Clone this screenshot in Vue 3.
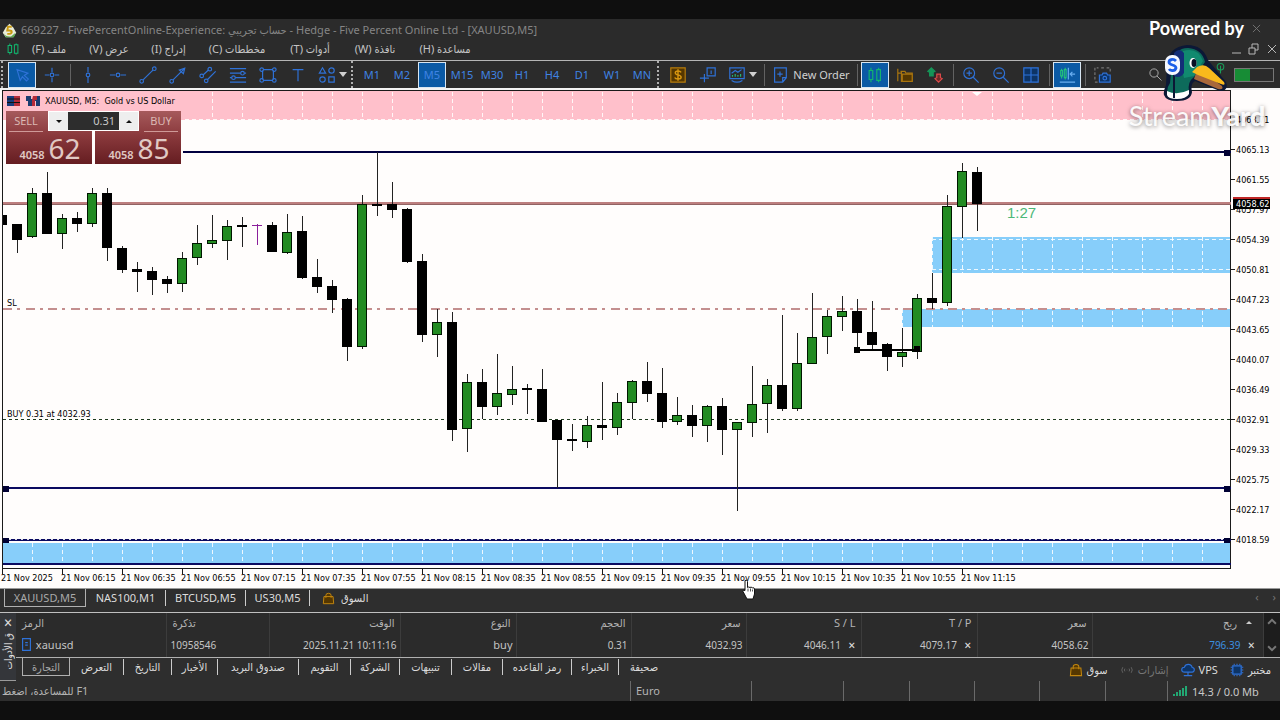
<script setup>
import { ref } from 'vue'

const volume = ref('0.31')

const menus = ['ملف (F)', 'عرض (V)', 'إدراج (I)', 'مخططات (C)', 'أدوات (T)', 'نافذة (W)', 'مساعدة (H)']

const icons = {
  cursor: '<path d="M4.500 4l3.500 12 2.500-4 4.500 4.500 2-2-4.500-4 4-2.500z"/>',
  cross: '<path d="M10 2v5M10 13v5M2 10h5M13 10h5"/><circle cx="10" cy="10" r="2"/>',
  vline: '<path d="M10 1v6M10 12v7"/><circle cx="10" cy="10" r="2"/>',
  hline: '<path d="M1 10h6M13 10h6"/><circle cx="10" cy="10" r="2"/>',
  trend: '<path d="M4.500 15.500l11-11"/><circle cx="3" cy="17" r="2"/><circle cx="17" cy="3" r="2"/>',
  arrow: '<path d="M4.500 15.500l12-12M11.500 4.500l6-2-1.500 6z"/><circle cx="3" cy="17" r="2"/>',
  channel: '<path d="M4.500 10l6-5.500M9.500 15l9-9"/><circle cx="3" cy="11" r="2"/><circle cx="12" cy="3.500" r="2"/><circle cx="8" cy="16.500" r="2"/>',
  fib: '<path d="M1 3h18M1 8h12M17 8h2M1 13h2M7 13h12M1 18h18"/><circle cx="15" cy="8" r="2"/><circle cx="5" cy="13" r="2"/>',
  rect: '<path d="M5 4h10M5 16h10M4 5v10M16 5v10"/><circle cx="3" cy="4" r="2"/><circle cx="17" cy="4" r="2"/><circle cx="3" cy="16" r="2"/><circle cx="17" cy="16" r="2"/>',
  text: '<path d="M4 4h12M10 4v13"/>',
  shapes: '<path d="M5 2l3.500 6h-7zM12 12h6v6h-6z"/><circle cx="15" cy="5" r="3"/><circle cx="5" cy="15" r="3"/>',
  dollar: '<path d="M2 2h16v16H2z" fill="#553700" stroke="#b87d0c"/><path d="M13.500 7q-1-1.500-3.500-1.500-3 0-3 2 0 1.800 3 2.400 3.500.7 3.500 2.600 0 2-3.500 2-3 0-3.700-1.700M10 3.500v13" stroke="#d8960f" stroke-width="1.600"/>',
  info: '<path d="M9 2h9v9H9zM13.500 5v4M6 9v9M1 13.500h10"/>',
  indicators: '<path d="M2 2h16v12H2zM4 16q6 4 12 0"/><path d="M4 8l4-3 3 2 4-3" /><path d="M5 12v-2M8 12v-3M11 12v-2M14 12v-3" stroke="#25b577"/>',
  order: '<path d="M4 2h13v11l-4 5H4zM13 18v-5h4M10 6v6M7 9h6"/>',
  candles: '<path d="M5.500 2v3M5.500 15v3M3.500 5h4v10h-4zM14 2v2M14 16v2M12 4h4v12h-4z" stroke="#12b56e"/>',
  folders: '<path d="M5 6h5l1 2h7v9H6V6M2 3v14M2 8h4" stroke="#a9750f"/><path d="M7 9h11v8H7z" fill="#553700" stroke="#a9750f"/>',
  swap: '<path d="M6 2l4 4-2 1v4H4V7L2 6z" fill="#159458" stroke="#159458"/><path d="M14 18l4-4-2-1V9h-4v4l-2 1z" fill="#702828" stroke="#dc4a4a"/>',
  zoomIn: '<circle cx="8" cy="8" r="6"/><path d="M12.500 12.500l6 6M8 5v6M5 8h6"/>',
  zoomOut: '<circle cx="8" cy="8" r="6"/><path d="M12.500 12.500l6 6M5 8h6"/>',
  grid: '<path d="M2 2h16v16H2zM10 2v16M2 10h16" fill="#0d3466"/>',
  shift: '<path d="M11.500 2v13M19 9h-5M16 6.500L13.500 9l2.500 2.500M2 18h17" stroke="#69aef0"/><path d="M3 5h2v6H3zM7 4h2v9H7zM4 3v2M4 11v3M8 2v2M8 13v2" stroke="#22c07c"/>',
  camera: '<path d="M1 15V2h4M8 2h3M14 2h4v4M1 18h3" stroke="#777" stroke-dasharray="3 2"/><path d="M6 10h3l1-2h4l1 2h3v8H6z" fill="#0d3466"/><circle cx="12" cy="13.500" r="2"/>',
  search: '<circle cx="8" cy="8" r="5.500" stroke="#aaa"/><path d="M12 12l6 6" stroke="#aaa"/>',
  pin: '<circle cx="10" cy="7" r="6" stroke="#1a9a5a" stroke-width="2"/><path d="M10 5v14" stroke="#1a9a5a" stroke-width="2"/>',
  bag: '<path d="M3 7h14l1 11H2zM6 9V5q0-3 4-3t4 3v4" fill="#553700" stroke="#c1860f" stroke-width="1.500"/>',
  chart: '<path d="M5.500 2v3M5.500 15v3M3 5h5v10H3zM14.500 2v2M14.500 16v2M12 4h5v12h-5z" stroke="#12b56e" stroke-width="1.500"/>',
  doc: '<path d="M4 1h12v18H4zM8 7h4M8 11h4" stroke-width="1.800"/>',
  cloud: '<path d="M5 13q-4 0-4-3.500T5 6q1-4 5.500-4T16 6.500q3 0 3 3.200T16 13zM10 13v4M4 18h12" fill="#0d3466" stroke-width="1.600"/>',
  chip: '<path d="M4 4h12v12H4z" fill="#0d3466" stroke-width="1.800"/><path d="M6 1v2M10 1v2M14 1v2M6 17v2M10 17v2M14 17v2M1 6h2M1 10h2M1 14h2M17 6h2M17 10h2M17 14h2" stroke-width="1.500"/>',
  signals: '<path d="M4 6q-3 4 0 8M7 8q-1.500 2 0 4M13 8q1.500 2 0 4M16 6q3 4 0 8M10 9.500v1" stroke="#666"/>'
}

const drawTools = [
  { icon: 'cursor', label: 'Cursor', active: true },
  { icon: 'cross', label: 'Crosshair' },
  { sep: true },
  { icon: 'vline', label: 'Vertical line' },
  { icon: 'hline', label: 'Horizontal line' },
  { icon: 'trend', label: 'Trendline' },
  { icon: 'arrow', label: 'Arrow' },
  { icon: 'channel', label: 'Channel' },
  { icon: 'fib', label: 'Fibonacci' },
  { icon: 'rect', label: 'Rectangle' },
  { icon: 'text', label: 'Text' },
  { icon: 'shapes', label: 'Shapes', caret: true }
]
const frames = ['M1', 'M2', 'M5', 'M15', 'M30', 'H1', 'H4', 'D1', 'W1', 'MN']
const activeFrame = ref('M5')
const chartTools = [
  { icon: 'dollar', label: 'Trading' },
  { icon: 'info', label: 'Data window' },
  { icon: 'indicators', label: 'Indicators', caret: true },
  { sep: true },
  { icon: 'order', label: 'New Order', text: 'New Order' },
  { sep: true },
  { icon: 'candles', label: 'Candlesticks', active: true },
  { icon: 'folders', label: 'Templates' },
  { icon: 'swap', label: 'Up and down' },
  { sep: true },
  { icon: 'zoomIn', label: 'Zoom in' },
  { icon: 'zoomOut', label: 'Zoom out' },
  { icon: 'grid', label: 'Tile windows' },
  { sep: true },
  { icon: 'shift', label: 'Chart shift', active: true },
  { sep: true },
  { icon: 'camera', label: 'Screenshot' }
]

// [high, body top, body bottom, low, direction]
const candles = [
  [215, 215, 225, 225, 'd'], [224, 224, 240, 253, 'd'], [188, 193, 237, 238, 'u'], [172, 193, 234, 234, 'd'],
  [214, 218, 234, 249, 'u'], [212, 218, 224, 232, 'd'], [188, 193, 224, 227, 'u'], [188, 193, 248, 261, 'd'],
  [246, 248, 270, 273, 'd'], [262, 269, 272, 292, 'd'], [267, 271, 280, 295, 'd'], [276, 279, 284, 293, 'd'],
  [252, 258, 284, 292, 'u'], [225, 243, 258, 265, 'u'], [215, 240, 244, 248, 'u'], [220, 226, 241, 260, 'u'],
  [217, 225, 227, 247, 'd'], [224, 225, 226, 245, 'n'], [222, 225, 252, 252, 'd'], [214, 232, 253, 254, 'u'],
  [216, 231, 278, 279, 'd'], [259, 277, 287, 293, 'd'], [280, 286, 300, 313, 'd'], [298, 299, 347, 361, 'd'],
  [195, 204, 347, 349, 'u'], [152, 204, 206, 216, 'd'], [182, 204, 210, 218, 'd'], [208, 209, 262, 263, 'd'],
  [254, 261, 335, 342, 'd'], [309, 322, 335, 357, 'u'], [312, 322, 430, 441, 'd'], [374, 382, 429, 452, 'u'],
  [369, 382, 407, 419, 'd'], [354, 393, 407, 415, 'u'], [366, 389, 395, 405, 'u'], [384, 388, 390, 414, 'd'],
  [369, 389, 422, 422, 'd'], [420, 420, 440, 488, 'd'], [424, 439, 441, 451, 'd'], [416, 425, 442, 448, 'u'],
  [382, 425, 428, 440, 'd'], [393, 402, 428, 435, 'u'], [380, 381, 403, 419, 'u'], [362, 381, 394, 402, 'd'],
  [368, 393, 422, 428, 'd'], [397, 415, 422, 425, 'u'], [405, 415, 426, 437, 'd'], [405, 406, 426, 442, 'u'],
  [398, 406, 430, 455, 'd'], [422, 422, 430, 511, 'u'], [366, 404, 423, 437, 'u'], [379, 385, 404, 433, 'u'],
  [315, 385, 409, 411, 'd'], [333, 363, 409, 411, 'u'], [293, 337, 364, 364, 'u'], [310, 316, 337, 354, 'u'],
  [296, 311, 317, 331, 'u'], [299, 311, 333, 348, 'd'], [301, 332, 345, 349, 'd'], [343, 344, 357, 371, 'd'],
  [328, 352, 357, 367, 'u'], [294, 298, 352, 359, 'u'], [273, 298, 303, 309, 'd'], [195, 206, 303, 306, 'u'],
  [163, 171, 207, 238, 'u'], [167, 172, 204, 231, 'd']
].map(([high, top, bottom, low, dir], i) => {
  const x = 15 * i + 2
  const left = Math.max(x - 5, 3)
  return { x, left, width: x + 6 - left, high, top, bottom, low, dir }
})
const bodyFill = { u: '#228b22', d: '#000', n: '#8b1f9b' }
const bodyLine = { u: '#001800', d: '#000', n: '#8b1f9b' }

const prices = ['4068.71', '4065.13', '4061.55', '4057.97', '4054.39', '4050.81', '4047.23', '4043.65', '4040.07', '4036.49', '4032.91', '4029.33', '4025.75', '4022.17', '4018.59']
const times = ['2025', '06:15', '06:35', '06:55', '07:15', '07:35', '07:55', '08:15', '08:35', '08:55', '09:15', '09:35', '09:55', '10:15', '10:35', '10:55', '11:15']
const gridX = Array.from({ length: 40 }, (_, i) => 32 + 30 * i)

const symbols = ['XAUUSD,M5', 'NAS100,M1', 'BTCUSD,M5', 'US30,M5']
const columns = ['الرمز', 'تذكرة', 'الوقت', 'النوع', 'الحجم', 'سعر', 'S / L', 'T / P', 'سعر', 'ربح']
const tabs = ['التجارة', 'التعرض', 'التاريخ', 'الأخبار', 'صندوق البريد', 'التقويم', 'الشركة', 'تنبيهات', 'مقالات', 'رمز القاعده', 'الخبراء', 'صحيفة']
</script>

<template>
  <div class="terminal">
    <header class="title">
      <svg class="logo" viewBox="0 0 20 20">
        <path d="M10 1l5 5 4 7-4 6H5l-4-6 4-7z" fill="#e9ecd8" />
        <path d="M2 13q3 6 10 5l6-5-2 6H5z" fill="#5aa84d" />
        <path d="M13 5H8L7 10h3q3 0 3 2t-3 2.500H7" fill="none" stroke="#c99a10" stroke-width="2.500" />
      </svg>
      <h1>669227 - FivePercentOnline-Experience: حساب تجريبي - Hedge - Five Percent Online Ltd - [XAUUSD,M5]</h1>
    </header>

    <nav class="menu">
      <svg class="icon menu-icon" viewBox="0 0 20 20" v-html="icons.chart"></svg>
      <button v-for="m in menus" :key="m" type="button" dir="rtl">{{ m }}</button>
      <svg class="window-controls" viewBox="0 0 48 14">
        <path d="M2 11h9M19 6h6v6h-6zM22 6V2h6v6h-3M38 3l8 8M46 3l-8 8" />
      </svg>
    </nav>

    <div class="toolbar">
      <i class="grip"></i>
      <template v-for="(t, i) in drawTools" :key="'d' + i">
        <i v-if="t.sep" class="sep"></i>
        <button v-else type="button" class="tool" :class="{ active: t.active, wide: t.caret }" :aria-label="t.label">
          <svg class="icon" viewBox="0 0 20 20" v-html="icons[t.icon]"></svg>
          <i v-if="t.caret" class="caret"></i>
        </button>
      </template>
      <i class="grip"></i>
      <button
        v-for="f in frames" :key="f" type="button" class="tool frame"
        :class="{ active: f === activeFrame }" @click="activeFrame = f"
      >{{ f }}</button>
      <i class="grip"></i>
      <template v-for="(t, i) in chartTools" :key="'c' + i">
        <i v-if="t.sep" class="sep"></i>
        <button v-else type="button" class="tool" :class="{ active: t.active, wide: t.caret, order: t.text }" :aria-label="t.label">
          <svg class="icon" viewBox="0 0 20 20" v-html="icons[t.icon]"></svg>
          <span v-if="t.text">{{ t.text }}</span>
          <i v-if="t.caret" class="caret"></i>
        </button>
      </template>
      <div class="toolbar-end">
        <button type="button" class="tool" aria-label="Search">
          <svg class="icon search" viewBox="0 0 20 20" v-html="icons.search"></svg>
        </button>
        <svg class="icon pin" viewBox="0 0 20 20" v-html="icons.pin"></svg>
        <i class="level"></i>
      </div>
    </div>

    <main class="chart">
      <svg class="plot" viewBox="0 90 1280 498">
        <rect x="3" y="91" width="1228" height="29" fill="#ffc0cb" />
        <rect x="932" y="237" width="299" height="36" fill="#87cefa" />
        <rect x="902" y="309" width="329" height="18" fill="#87cefa" />
        <rect x="3" y="543" width="1228" height="21" fill="#87cefa" />

        <g class="crisp" stroke="#1a1a1a" fill="none">
          <path d="M2.500 569V90.500H1230.500V568.500H2" />
          <path v-for="(p, i) in prices" :key="p" :d="`M1231 ${119.5 + 30 * i}h4`" />
          <path v-for="(t, i) in times" :key="t" :d="`M${2.5 + 60 * i} 569v5`" />
        </g>

        <g class="crisp">
          <rect x="3" y="202" width="1228" height="3" fill="#bd7f7f" />
          <rect x="3" y="204" width="1228" height="1" fill="#926363" />
          <path d="M3 309H1231" stroke="#c48f8f" stroke-width="2" stroke-dasharray="9 5 3 5.500" />
          <path d="M3 419.500H1231" stroke="#1e3a1e" stroke-dasharray="3 3" />
          <path d="M3 152H1231" stroke="#000040" stroke-width="2" />
          <path d="M3 488H1231M3 540H1231M3 564H1231" stroke="#0a0a60" stroke-width="2" />
        </g>
        <g stroke="#fff" class="crisp" stroke-opacity="0.85" stroke-dasharray="4 3" fill="none">
          <path d="M3 119.500H1231M932 239.500H1231M932 269.500H1231M932.500 237V273M902.500 309V327" />
          <path d="M3 539.500H1231" stroke-dasharray="2 4" />
          <template v-for="x in gridX" :key="x">
            <path :d="`M${x + 0.5} 92V120M${x + 0.5} 543V563`" />
            <path v-if="x > 932" :d="`M${x + 0.5} 237V273`" />
            <path v-if="x > 902" :d="`M${x + 0.5} 311V327`" />
          </template>
        </g>

        <g v-for="c in candles" :key="c.x" class="crisp">
          <rect :x="c.x" :y="c.high" width="1" :height="c.low - c.high" :fill="c.dir === 'n' ? bodyFill.n : '#222'" />
          <rect v-if="c.bottom - c.top < 3" :x="c.left" :y="c.top" :width="c.width - 1" :height="c.bottom - c.top" :fill="bodyFill[c.dir]" />
          <rect
            v-else :x="c.left + 0.5" :y="c.top + 0.5" :width="c.width - 2" :height="c.bottom - c.top - 1"
            :fill="bodyFill[c.dir]" :stroke="bodyLine[c.dir]"
          />
        </g>

        <path d="M857 350H917" stroke="#000" stroke-width="2" class="crisp" />
        <path d="M854 347h6v6h-6zM914 346h6v6h-6z" fill="#000" />
        <path d="M3 486h6v6h-6zM1224 486h6v6h-6zM1224 150h6v6h-6zM3 538h6v5h-6zM1224 538h6v5h-6z" fill="#000033" />
        <path d="M972 92h10l-5 4z" fill="#fff" />

        <g class="axis">
          <text v-for="(p, i) in prices" :key="p" x="1236" :y="123 + 30 * i">{{ p }}</text>
          <text v-for="(t, i) in times" :key="t" :x="1 + 60 * i" y="581">21 Nov {{ t }}</text>
          <text x="7" y="306">SL</text>
          <text x="7" y="417">BUY 0.31 at 4032.93</text>
        </g>
        <rect x="1233" y="197" width="37" height="12" fill="#000" />
        <rect x="1233" y="197" width="37" height="2" fill="#c02626" />
        <text x="1236" y="207" class="axis tag">4058.62</text>
        <text x="1007" y="218" class="timer">1:27</text>
      </svg>

      <section class="trade">
        <div class="caption">
          <svg viewBox="0 0 34 10">
            <path d="M0 0h13v10H0z" fill="#b62a38" /><path d="M0 0h7v10H0z" fill="#173c7c" />
            <path d="M0 3h13M0 6.500h13" stroke="#111" />
            <path d="M19 0h5v3h3V0h6v10h-4V5h-3v5h-5V5h-2z" fill="#1b3c70" /><path d="M26 0h4v4h-2v6h-3V4z" fill="#b62a38" />
          </svg>
          <span>XAUUSD, M5:&nbsp; Gold vs US Dollar</span>
        </div>
        <div class="sides">
          <button type="button" class="side"><span class="word">SELL</span><span class="quote"><b>4058</b>62</span></button>
          <button type="button" class="side buy"><span class="word">BUY</span><span class="quote"><b>4058</b>85</span></button>
          <div class="stepper">
            <button type="button" aria-label="Decrease volume"><i class="down"></i></button>
            <input v-model="volume" type="text" aria-label="Volume" />
            <button type="button" aria-label="Increase volume"><i class="up"></i></button>
          </div>
        </div>
      </section>
    </main>

    <nav class="symbols">
      <button v-for="(s, i) in symbols" :key="s" type="button" :class="{ current: i === 0 }">{{ s }}</button>
      <button type="button" class="market"><svg class="icon small" viewBox="0 0 20 20" v-html="icons.bag"></svg>السوق</button>
      <span class="pager"><i>‹</i><i>›</i></span>
    </nav>

    <section class="toolbox">
      <aside class="strip">
        <button type="button" aria-label="Close toolbox">✕</button>
        <span class="strip-name">ق الأدوات</span>
      </aside>
      <div class="toolbox-body">
        <div class="positions">
          <table>
            <colgroup><col v-for="(c, i) in columns" :key="i" :class="'c' + i" /></colgroup>
            <thead>
              <tr><th v-for="(c, i) in columns" :key="i" scope="col">{{ c }}<i v-if="i === 9" class="up sort"></i></th></tr>
            </thead>
            <tbody>
              <tr>
                <td class="name"><svg class="icon small" viewBox="0 0 20 20" v-html="icons.doc"></svg> xauusd</td>
                <td>10958546</td>
                <td>2025.11.21 10:11:16</td>
                <td class="name">buy</td>
                <td>0.31</td>
                <td>4032.93</td>
                <td>4046.11<button type="button" aria-label="Remove stop loss">✕</button></td>
                <td>4079.17<button type="button" aria-label="Remove take profit">✕</button></td>
                <td>4058.62</td>
                <td class="profit">796.39<button type="button" aria-label="Close position">✕</button></td>
              </tr>
            </tbody>
          </table>
          <svg class="scroller" viewBox="0 0 16 45"><path d="M4 11l4-4 4 4M4 34l4 4 4-4" /></svg>
        </div>
        <div class="tabs">
          <nav><button v-for="(t, i) in tabs" :key="t" type="button" :class="{ current: i === 0 }">{{ t }}</button></nav>
          <div class="services">
            <a href="#"><svg class="icon" viewBox="0 0 20 20" v-html="icons.bag"></svg>سوق</a>
            <a href="#" class="off"><svg class="icon" viewBox="0 0 20 20" v-html="icons.signals"></svg>إشارات</a>
            <a href="#"><svg class="icon" viewBox="0 0 20 20" v-html="icons.cloud"></svg>VPS</a>
            <a href="#"><svg class="icon" viewBox="0 0 20 20" v-html="icons.chip"></svg>مختبر</a>
          </div>
        </div>
      </div>
    </section>

    <footer class="status">
      <span class="help">للمساعدة، اضغط F1</span>
      <span>Euro</span><span></span><span></span><span></span><span></span><span></span><span></span>
      <span class="net">
        <svg viewBox="0 0 14 10"><path d="M1 10V8M4 10V6M7 10V4M10 10V2M13 10V0" /></svg>14.3 / 0.0 Mb
      </span>
    </footer>

    <div class="watermark">
      <p class="powered">Powered by</p>
      <svg class="close" viewBox="0 0 10 10"><path d="M1 1l8 8M9 1l-8 8" /></svg>
      <svg class="duck" viewBox="0 0 66 60">
        <path d="M2 52Q1 49 4 42L5 22Q6 4 25 2 41 2 46 17L64 39Q67 48 58 48L33 38Q28 41 30 49 29 58 15 58 4 58 2 52z" fill="#0c1836" />
        <path d="M5 49Q5 44 8 40L10 22Q12 5 26 5 40 6 43 19L32 34Q25 39 27 49 22 53 15 53 8 53 5 49z" fill="#0d6b5b" />
        <path d="M21 8Q36 4 41 18L32 33 22 35 18 18z" fill="#118a6f" />
        <path d="M5 48Q15 53 27 47L27 51Q24 56 15 56 6 56 5 52z" fill="#fff" />
        <path d="M34 30Q45 31 60 43 62 47 56 46L32 36z" fill="#a9683b" />
        <path d="M35 24Q42 20 47 25L62 39Q64 43 59 41L36 32 30 29z" fill="#f9b91c" />
        <path d="M12 30V55" stroke="#0c1836" stroke-width="2" />
        <path d="M12 10Q17 4 22 10v20q-4 6-10 3z" fill="#132e78" />
        <rect x="3" y="12" width="15" height="20" rx="7" fill="#f5f8ff" />
        <path d="M14 18Q12 16 10 16.500 7 17 7 19 7 21 10.500 22 14 23 14 25 13 28 10 27.500 8 27.500 7 26" fill="none" stroke="#1c5fe8" stroke-width="2.800" />
        <ellipse cx="31" cy="20" rx="3.500" ry="5" fill="#fff" /><ellipse cx="32" cy="20" rx="2.500" ry="4" fill="#071024" />
      </svg>
      <p class="brand">Stream<b>Yard</b></p>
    </div>

    <svg class="hand" viewBox="0 0 14 20">
      <path d="M3 1q2-1 2.500 1v6q1-1 2.500 0 1-1 2.300.3 2-.6 2.200 1.200v5l-1.500 5H5L1 12q0-2 2-1z" fill="#fff" stroke="#111" />
      <path d="M6 9v3M8.500 9v3M10.500 10v2" stroke="#555" />
    </svg>
  </div>
</template>

<style>
body { margin: 0; background: #0f0f0f; }
</style>

<style scoped>
.terminal {
  position: relative;
  padding: 19px 0;
  overflow: hidden;
  background: #0f0f0f;
  color: #c4c4c4;
  font-family: "Noto Sans", "DejaVu Sans Condensed", "DejaVu Sans", sans-serif;
  font-size: 11px;
  line-height: 16px;
}
.terminal * { box-sizing: border-box; }
h1, p { margin: 0; font-weight: 400; }
button {
  padding: 0; border: 0; background: none; color: inherit;
  font: inherit; white-space: nowrap;
}
a { color: inherit; text-decoration: none; }
.icon { display: block; flex: none; width: 18px; height: 18px; fill: none; stroke: #2f72d8; stroke-width: 1.3; }
.icon.small { width: 13px; height: 13px; }
.crisp { shape-rendering: crispEdges; }

.title { display: flex; align-items: center; gap: 4px; height: 22px; padding: 0 2px; background: #2b2b2b; }
.logo { width: 15px; height: 15px; }
.title h1 { color: #858585; font-size: 11px; white-space: nowrap; }

.menu {
  display: grid;
  grid-template-columns: 20px 58px 62px 57px 80px 66px 64px 76px 1fr;
  align-items: center; height: 19px; padding-bottom: 3px; background: #2b2b2b;
}
.menu-icon { width: 14px; height: 14px; margin-left: 6px; }
.window-controls { width: 48px; height: 14px; justify-self: end; margin-right: 2px; fill: none; stroke: #b8b8b8; }

.toolbar {
  display: flex; align-items: center; height: 30px; padding-left: 1px;
  border-top: 1px solid #b5b5b5; border-bottom: 2px solid #f2f2f2;
  background: #2b2b2b;
}
.grip { flex: none; width: 6px; height: 27px; border-left: 2px dotted #b0b0b0; }
.sep { flex: none; width: 1px; height: 22px; margin: 0 2px 0 3px; background: #626262; }
.tool { display: flex; align-items: center; justify-content: center; flex: none; width: 30px; height: 26px; }
.tool.wide { width: 38px; gap: 3px; justify-content: flex-start; padding-left: 5px; }
.tool.active { border: 1px solid #d8e6f2; background: #0b5aa5; width: 28px; margin: 0 1px; }
.tool.order { width: 87px; gap: 4px; color: #d0d0d0; }
.frame { color: #3f83e4; }
.caret { border: 4px solid transparent; border-top: 5px solid #d0d0d0; border-bottom: 0; }
.toolbar-end { display: flex; align-items: center; margin-left: auto; padding-right: 6px; }
.search { width: 15px; height: 15px; }
.pin { width: 11px; height: 13px; margin: 0 8px 12px 45px; }
.level { width: 40px; height: 14px; border: 1px solid #777; background: linear-gradient(90deg, #178c35 15px, #2b2b2b 15px); }

.chart { position: relative; background: #fffdfc; }
.plot { display: block; width: 100%; height: auto; }
.axis { font-family: "DejaVu Sans Condensed", "DejaVu Sans", sans-serif; font-size: 9px; fill: #000; }
.tag { fill: #fff; }
.timer { font-family: "Liberation Sans", Arial, sans-serif; font-size: 15px; fill: #4cb878; }

.trade { position: absolute; left: 3px; top: 2px; width: 180px; padding: 3px 2px 2px 3px; background: linear-gradient(#ffc0cb 28px, #fffdfc 28px); }
.caption {
  display: flex; align-items: center; gap: 4px; height: 12px; margin-bottom: 4px; color: #000;
  font-family: "DejaVu Sans Condensed", "DejaVu Sans", sans-serif; font-size: 9px; white-space: nowrap;
}
.caption svg { width: 34px; height: 10px; margin-left: 1px; }
.sides { position: relative; display: grid; grid-template-columns: 1fr 1fr; gap: 3px; }
.side {
  display: flex; flex-direction: column; align-items: flex-start; height: 53px;
  background: linear-gradient(#a65a5c, #8b3a3d 45%, #651d21); color: #e0c9c4;
}
.side.buy { align-items: flex-end; }
.word { width: 34px; margin: 0 3px; height: 21px; border-bottom: 1px solid #cf9a98; line-height: 20px; color: #dcb9b4; text-align: center; }
.quote { display: flex; align-items: baseline; gap: 4px; align-self: center; padding-left: 2px; font-size: 28px; line-height: 32px; }
.quote b { font-size: 11px; font-weight: 600; }
.stepper {
  position: absolute; left: 42px; top: 0; display: flex; width: 91px; height: 20px;
  border: 1px solid #fff; background: #eee;
}
.stepper button { display: grid; place-items: center; flex: none; width: 19px; }
.stepper input {
  min-width: 0; flex: 1; border: 0; padding: 0 4px; background: #2d2d2d; color: #c8c8c8;
  font: inherit; text-align: right;
}
.up, .down { border: 3px solid transparent; }
.down { border-top: 3px solid #111; border-bottom: 0; }
.up { border-bottom: 3px solid #111; border-top: 0; }

.symbols {
  display: grid; grid-template-columns: 82px 80px 80px 64px auto 1fr; align-items: start;
  height: 24px; padding: 0 4px; border-top: 1px solid #9a9a9a; background: #2e2e2e; color: #ddd;
}
.symbols button { height: 16px; margin-top: 1px; line-height: 16px; }
.symbols button:not(.current):not(.market) { border-right: 1px solid #ccc; }
.symbols .current { height: 18px; margin-top: 0; border: 1px solid #b0b0b0; border-top: 0; line-height: 16px; color: #aaa; }
.symbols .market { display: flex; align-items: center; gap: 6px; padding-left: 12px; }
.pager { display: flex; gap: 14px; justify-self: end; color: #777; }
.pager i { font-style: normal; }

.toolbox { display: flex; height: 69px; border-top: 1px solid #c0c0c0; border-bottom: 1px solid #9a9a9a; background: #2b2b2b; }
.strip { display: flex; flex-direction: column; align-items: center; width: 16px; background: #34363a; color: #e0e0e0; }
.strip button { height: 20px; font-size: 12px; font-weight: 700; }
.strip-name { writing-mode: vertical-rl; transform: rotate(180deg); white-space: nowrap; font-size: 10px; line-height: 14px; }
.toolbox-body { flex: 1; min-width: 0; }
.positions { display: flex; height: 44px; }
table { flex: 1; min-width: 0; table-layout: fixed; border-collapse: collapse; }
.c0 { width: 150px; } .c1 { width: 103px; } .c2 { width: 131px; } .c3 { width: 116px; }
.c4, .c5, .c6, .c8 { width: 115px; } .c7 { width: 116px; }
th, td { height: 20px; padding: 0 5px 0 0; border-right: 1px solid #3c3c3c; font-weight: 400; text-align: right; white-space: nowrap; }
td { padding-right: 3px; font-size: 10px; }
td.name { font-size: 11px; }
th { color: #b4b4b4; }
th:first-child, td:first-child, th:nth-child(2), td:nth-child(2) { padding-left: 4px; text-align: left; }
th:first-child, th:nth-child(2) { padding-left: 6px; }
td .icon { display: inline-block; vertical-align: -2px; }
td button { margin: 0 2px 0 7px; color: #e0e0e0; font-size: 10px; font-weight: 700; }
.profit { padding-right: 6px; color: #3b8fe0; }
.sort { display: inline-block; margin: 0 6px 3px 9px; border-bottom-color: #ccc; }
.scroller { width: 16px; height: 44px; background: #1d1d1d; fill: none; stroke: #777; stroke-width: 2; }
.tabs { display: flex; justify-content: space-between; height: 24px; border-top: 1px solid #b0b0b0; background: #2e2e2e; color: #dcdcdc; }
.tabs nav { display: grid; grid-template-columns: 48px 54px 48px 46px 81px 52px 49px 52px 51px 69px 47px 50px; margin-left: 6px; }
.tabs nav button { height: 16px; margin-top: 1px; border-right: 1px solid #ccc; line-height: 14px; }
.tabs nav button:last-child { border-right: 0; }
.tabs nav .current { height: 18px; margin-top: 0; border: 1px solid #b0b0b0; border-top: 0; color: #aaa; }
.services { display: flex; align-items: center; gap: 12px; padding-right: 9px; }
.services a { display: flex; align-items: center; gap: 4px; white-space: nowrap; }
.services .icon { width: 14px; height: 14px; }
.services .off { color: #777; }

.status {
  display: grid; grid-template-columns: minmax(0, 1fr) 121px 92px 66px 65px 65px 66px 62px 112px;
  height: 20px; background: #2e2e2e; line-height: 19px; color: #b4b4b4; white-space: nowrap;
}
.status span { padding-left: 5px; border-right: 1px solid #6a6a6a; }
.status .help { padding-left: 2px; }
.status .net { display: flex; align-items: center; gap: 5px; border: 0; color: #c8c8c8; }
.status svg { width: 14px; height: 10px; stroke: #22a873; stroke-width: 2; }

.watermark { position: absolute; top: 18px; right: 13px; width: 140px; color: #fff; font-family: Lato, sans-serif; }
.powered { padding-left: 22px; font-size: 18px; font-weight: 700; line-height: 20px; white-space: nowrap; }
.close { position: absolute; right: 6px; top: 6px; width: 9px; height: 9px; stroke: #777; }
.duck { display: block; width: 66px; height: 60px; margin: 5px 0 0 35px; }
.brand { color: #fffffff0; font-size: 27px; line-height: 26px; text-align: center; text-shadow: 0 1px 4px #00000080; }
.brand b { font-weight: 900; }
.hand { position: absolute; left: 742px; top: 579px; width: 14px; height: 21px; }
</style>
